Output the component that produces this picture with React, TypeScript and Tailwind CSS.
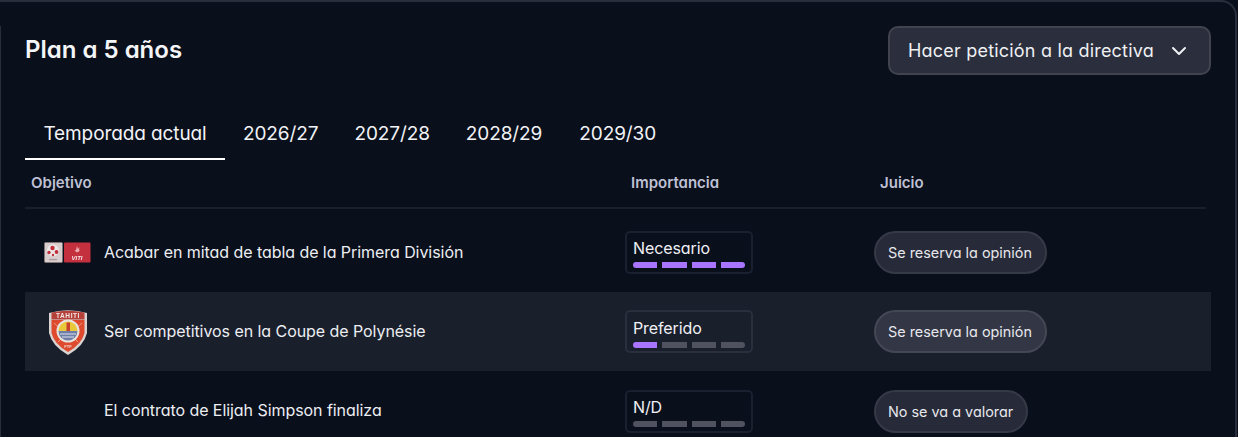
const font = "font-['Inter',sans-serif] [font-feature-settings:'cv11'_1,'ss03'_1]";

function Bars({ n }: { n: number }) {
  return (
    <div className="flex gap-[5px] mt-[4px]">
      {[0, 1, 2, 3].map((i) => (
        <div
          key={i}
          className={`h-[6px] w-[24.5px] ${i === 0 ? "rounded-l-[3px]" : ""} ${i === 3 ? "rounded-r-[3px]" : ""} ${i < n ? "bg-[#a974ff]" : "bg-[#50535f]"}`}
        />
      ))}
    </div>
  );
}

function Importance({ label, n, alt }: { label: string; n: number; alt?: boolean }) {
  return (
    <div className={`w-[128px] h-[43px] rounded-[5px] border-2 px-[6px] text-[16px] leading-[19px] tracking-[-0.1px] text-[#f0f1f5] ${alt ? "pt-[7px] border-[#2b2f3d]" : "pt-[6px] border-[#1b2030]"}`}>
      {label}
      <Bars n={n} />
    </div>
  );
}

function Pill({ label, alt }: { label: string; alt?: boolean }) {
  return (
    <div className={`h-[43px] rounded-full border-2 pl-[12px] pr-[13px] flex items-center text-[14.4px] text-[#e6e7ec] ${alt ? "bg-[#333644] border-[#444754]" : "bg-[#272a38] border-[#363946]"}`}>
      {label}
    </div>
  );
}

function Row({ icon, text, label, n, pill, alt, last }: { icon?: React.ReactNode; text: string; label: string; n: number; pill: string; alt?: boolean; last?: boolean }) {
  return (
    <div className={`h-[79px] flex items-center ${alt ? "bg-[#1a1f2c]" : ""} ${last ? "pt-[2px]" : ""}`}>
      <div className="w-[79px] pl-[6px] flex justify-center shrink-0">{icon}</div>
      <div className={`w-[521px] shrink-0 text-[16px] tracking-[-0.06px] text-[#eceef2] ${last ? "pb-[4px]" : "pb-[2px]"}`}>{text}</div>
      <div className="w-[249px] shrink-0"><Importance label={label} n={n} alt={alt} /></div>
      <Pill label={pill} alt={alt} />
    </div>
  );
}

function League() {
  return (
    <svg width="47" height="21" viewBox="0 0 47 21" className="blur-[0.3px]">
      <rect x="0.5" y="0.5" width="18" height="20" rx="1" fill="#d8cccc" stroke="#8d7a7c" strokeWidth="0.6" />
      <circle cx="9" cy="8.5" r="6" fill="#ece6e6" />
      <circle cx="8.5" cy="6" r="2.2" fill="#c22f3c" />
      <circle cx="5" cy="10.5" r="1.7" fill="#c22f3c" />
      <circle cx="12.5" cy="10" r="1.9" fill="#c22f3c" />
      <circle cx="9" cy="13" r="1.2" fill="#c22f3c" />
      <rect x="5" y="17" width="8" height="1.2" fill="#a89a9c" />
      <rect x="20" y="0.5" width="26.5" height="20" rx="1" fill="#c5303f" />
      <path d="M33 4 l1 3 l1.5 -2 l-0.5 3.5 l1.5 0 l-3.5 2 l-2.5 -2 l1.5 -0.5z" fill="#e9a9ae" />
      <text x="33" y="17.5" textAnchor="middle" fontSize="6" fontWeight="800" fontStyle="italic" fill="#f6e4e5" fontFamily="Liberation Sans, sans-serif">VITI</text>
    </svg>
  );
}

function Crest() {
  return (
    <svg width="40" height="46" viewBox="0 0 40 46" className="blur-[0.3px]">
      <path d="M1 4 Q20 -1.5 39 4 L39 24 Q36 37 20 46 Q4 37 1 24 Z" fill="#d9d4d2" />
      <path d="M3.5 11 H36.5 V24 Q34 35 20 43 Q6 35 3.5 24 Z" fill="#dd4a2e" />
      <path d="M3.5 3.5 Q20 0 36.5 3.5 V10.5 H3.5 Z" fill="#b5413a" />
      <text x="20" y="9" textAnchor="middle" fontSize="6.5" fontWeight="800" fill="#f2e6e2" letterSpacing="0.6" fontFamily="Liberation Sans, sans-serif">TAHITI</text>
      <path d="M6 14 L15 22 M34 14 L25 22 M10 33 L15 28 M30 33 L25 28" stroke="#eb9a7f" strokeWidth="1" />
      <circle cx="20" cy="22" r="11.5" fill="#e9e3dd" />
      <path d="M10.5 22 A9.5 9.5 0 0 1 29.5 22 Z" fill="#e9c93a" />
      <path d="M18.5 13.5 h3.5 v9 h-3.5z" fill="#c9402f" />
      <path d="M10.5 22 H29.5 A9.5 9.5 0 0 1 10.5 22 Z" fill="#6f7ea8" />
      <path d="M12 25 H28 M14 28 H26" stroke="#dfe2ea" strokeWidth="1" />
      <text x="20" y="39" textAnchor="middle" fontSize="4" fontWeight="700" fill="#f6d9cf" fontFamily="Liberation Sans, sans-serif">FTF</text>
    </svg>
  );
}

export default function App() {
  return (
    <div className={`w-[1238px] h-[437px] overflow-hidden bg-[#0a0f1c] ${font}`}>
      <div className="w-[1237px] h-[470px] bg-[#0a0f1c] border-t-2 border-r-2 border-[#2a2e3c] rounded-tr-[16px] flex">
        <div className="w-px h-[440px] mt-[24px] bg-[#2a2e3c] shrink-0" />
        <div className="flex-1 pl-[24px] pr-[24px]">
          <div className="flex items-center justify-between pt-[24px]">
            <h1 className="text-[24px] font-semibold leading-[46px] pb-[2px] text-[#f4f5f7]">Plan a 5 años</h1>
            <button className="w-[323px] h-[49px] rounded-[10px] border-2 border-[#41444f] bg-[#2b2e3c] flex items-center pl-[18px] pr-[22px] justify-between text-[18px] tracking-[0.2px] text-[#eef0f3]">
              Hacer petición a la directiva
              <svg width="16" height="16" viewBox="0 0 16 16" fill="none" stroke="#eef0f3" strokeWidth="2" strokeLinecap="round" strokeLinejoin="round"><path d="M2 5l6 6 6-6" /></svg>
            </button>
          </div>
          <div className="flex mt-[34px] h-[51px] text-[#f2f3f6] text-[19px] tracking-[-0.1px]">
            <div className="w-[200px] flex justify-center pt-[11px] border-b-2 border-white">Temporada actual</div>
            <div className="ml-[18px] pt-[11px]">2026/27</div>
            <div className="ml-[36px] pt-[11px]">2027/28</div>
            <div className="ml-[36px] pt-[11px]">2028/29</div>
            <div className="ml-[37px] pt-[11px]">2029/30</div>
          </div>
          <div className="w-[1181px] h-[49px] mb-[4px] flex items-center border-b-2 border-[#1a1f2c] text-[15px] font-semibold text-[#bfc1d4]">
            <div className="w-[606px] pl-[6px]">Objetivo</div>
            <div className="w-[249px]">Importancia</div>
            <div>Juicio</div>
          </div>
          <Row icon={<League />} text="Acabar en mitad de tabla de la Primera División" label="Necesario" n={4} pill="Se reserva la opinión" />
          <Row alt icon={<Crest />} text="Ser competitivos en la Coupe de Polynésie" label="Preferido" n={1} pill="Se reserva la opinión" />
          <Row last text="El contrato de Elijah Simpson finaliza" label="N/D" n={0} pill="No se va a valorar" />
        </div>
      </div>
    </div>
  );
}
